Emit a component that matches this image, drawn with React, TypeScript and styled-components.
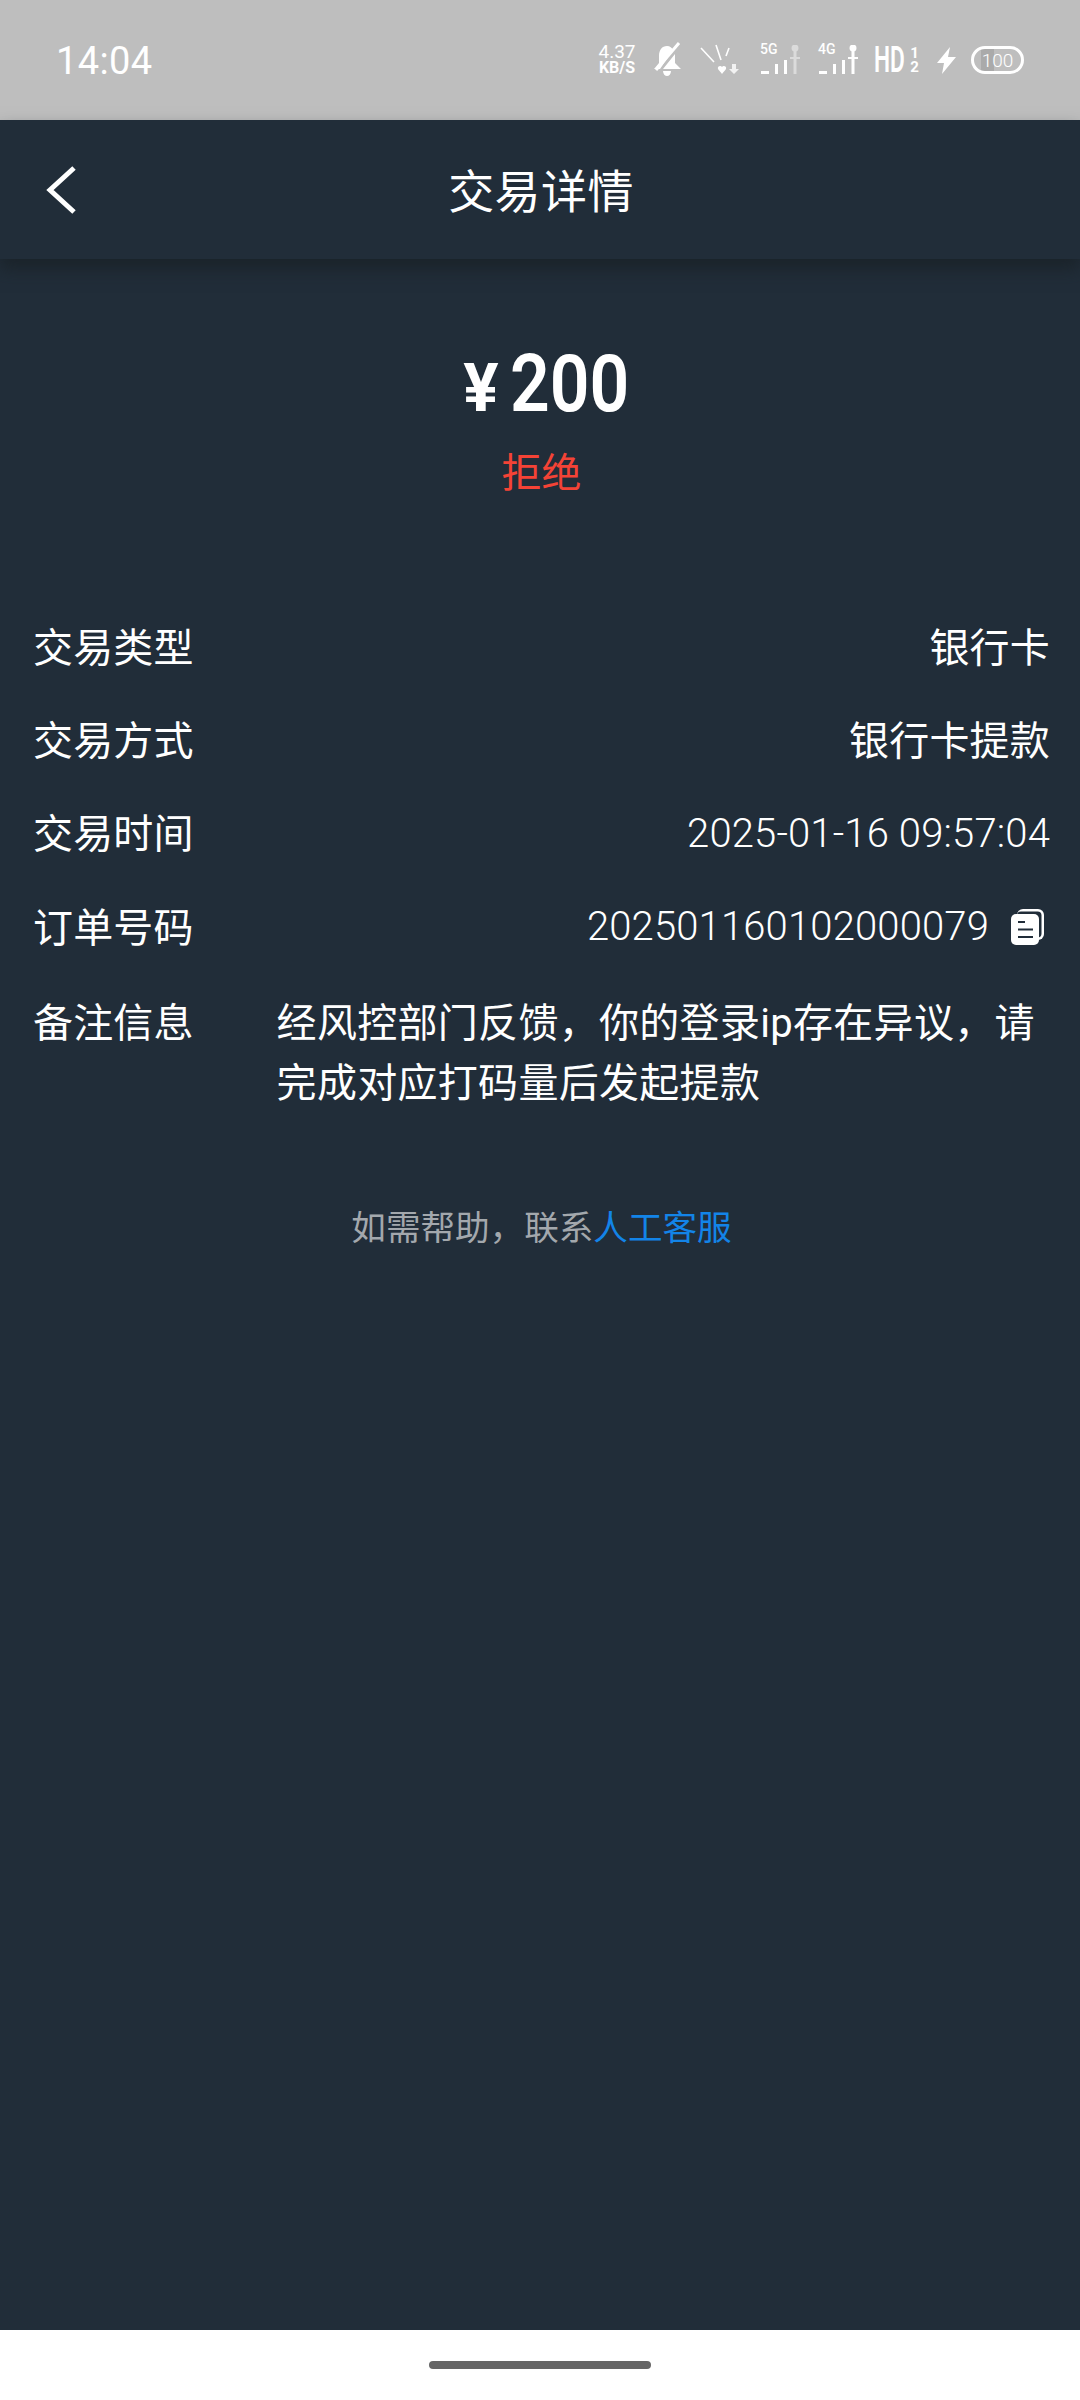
import React from "react";
import styled, { createGlobalStyle } from "styled-components";

const cjk = `Roboto, "Noto Sans CJK SC", sans-serif`;

const GlobalStyle = createGlobalStyle`
  html, body {
    margin: 0;
    padding: 0;
    background: #212d39;
  }
  * {
    box-sizing: border-box;
  }
`;

const Page = styled.div`
  display: flex;
  flex-direction: column;
  width: 1080px;
  height: 2400px;
  overflow: hidden;
  font-family: ${cjk};
  color: #fff;
  background: #212d39;
`;

const StatusBar = styled.div`
  display: flex;
  align-items: center;
  justify-content: space-between;
  flex: 0 0 120px;
  padding: 0 56px 0 56px;
  background: #bebebe;
`;
const Clock = styled.span`
  margin-top: 2px;
  font-size: 38px;
  font-weight: 400;
  letter-spacing: 0.4px;
  color: #fff;
`;
const StatusIcons = styled.div`
  display: flex;
  align-items: center;
`;
const StatusItem = styled.div<{ $gap: number }>`
  display: flex;
  align-items: center;
  margin-left: ${(p) => p.$gap}px;
`;
const Speed = styled.div`
  display: flex;
  flex-direction: column;
  align-items: center;
  width: 42px;
  font-size: 19px;
  line-height: 16px;
  font-weight: 400;
  white-space: nowrap;
  color: #fff;
`;
const SpeedUnit = styled.span`
  font-size: 16px;
  font-weight: 700;
`;
const Signal = styled.div`
  position: relative;
  width: 42px;
  height: 30px;
`;
const SignalLabel = styled.span`
  position: absolute;
  left: 0;
  top: -4px;
  font-size: 14px;
  line-height: 16px;
  font-weight: 500;
  color: #fff;
`;
const HdWrap = styled.div`
  display: flex;
  align-items: center;
  width: 45px;
  gap: 5px;
`;
const Hd = styled.span`
  display: inline-block;
  width: 31px;
  font-size: 36px;
  line-height: 30px;
  font-weight: 600;
  white-space: nowrap;
  transform: scaleX(0.63);
  transform-origin: left center;
  color: #fff;
`;
const HdFraction = styled.div`
  display: flex;
  flex-direction: column;
  align-items: center;
  width: 9px;
  font-size: 15px;
  line-height: 14px;
  font-weight: 700;
  color: #fff;
`;
const Battery = styled.div`
  display: flex;
  align-items: center;
  justify-content: center;
  width: 53px;
  height: 28px;
  border: 3px solid #fff;
  border-radius: 14px;
  font-size: 19px;
  font-weight: 300;
  color: #fff;
  background: linear-gradient(90deg, #bebebe 0 7px, #aaa 7px 20px, #bebebe 20px);
`;

const Header = styled.header`
  position: relative;
  display: grid;
  grid-template-columns: 120px 1fr 120px;
  align-items: center;
  flex: 0 0 139px;
  background: #212d39;
  box-shadow: 0 10px 16px rgba(24, 32, 36, 0.7);
`;
const BackButton = styled.button`
  display: flex;
  align-items: center;
  padding: 0 0 0 46px;
  border: 0;
  background: none;
`;
const Title = styled.h1`
  margin: 4px 0 0;
  padding-left: 2px;
  text-align: center;
  font-size: 46px;
  line-height: 60px;
  font-weight: 400;
  letter-spacing: 0.4px;
  color: #fff;
`;

const Content = styled.main`
  display: flex;
  flex-direction: column;
  flex: 1;
  padding: 0 30px 0 33px;
`;
const Summary = styled.section`
  display: flex;
  flex-direction: column;
  align-items: center;
  padding-top: 82px;
  margin-bottom: 100px;
`;
const Amount = styled.div`
  display: flex;
  align-items: baseline;
  height: 86px;
  padding-left: 8px;
  line-height: 86px;
  font-weight: 600;
`;
const Currency = styled.span`
  font-size: 66px;
  font-weight: 700;
  margin-right: 11px;
`;
const Digits = styled.span`
  display: inline-block;
  width: 118px;
  font-size: 80px;
  transform: scaleX(0.87);
  transform-origin: left center;
  white-space: nowrap;
`;
const Status = styled.div`
  margin-top: 19px;
  font-size: 40px;
  line-height: 56px;
  color: #f44336;
`;

const Rows = styled.dl`
  display: flex;
  flex-direction: column;
  margin: 0;
`;
const Row = styled.div`
  display: flex;
  align-items: center;
  justify-content: space-between;
  height: 93.3px;
`;
const Label = styled.dt`
  font-size: 40px;
  line-height: 60px;
  letter-spacing: 0.15px;
  color: #fff;
`;
const Value = styled.dd`
  display: flex;
  align-items: center;
  margin: 0;
  padding-bottom: 3px;
  font-size: 40px;
  line-height: 60px;
  font-weight: 300;
  letter-spacing: 0.15px;
  color: #fff;
`;
const CjkValue = styled(Value)`
  padding-bottom: 0;
  font-weight: 400;
  letter-spacing: 0.2px;
`;
const CopyIcon = styled.svg`
  margin-left: 22px;
  margin-right: 5px;
`;
const NoteRow = styled.div`
  display: flex;
  align-items: flex-start;
  margin-top: 19px;
`;
const NoteText = styled.dd`
  width: 765px;
  margin: 0 0 0 83px;
  font-size: 40px;
  line-height: 60px;
  font-weight: 400;
  letter-spacing: 0.3px;
  color: #fff;
`;
const Help = styled.p`
  margin: 88.5px 0 0;
  text-align: center;
  font-size: 34.6px;
  line-height: 50px;
  color: #a3a8ad;
`;
const HelpLink = styled.span`
  color: #1384e8;
`;

const HomeBar = styled.div`
  display: flex;
  align-items: center;
  justify-content: center;
  flex: 0 0 70px;
  background: #fff;
`;
const HomePill = styled.div`
  width: 222px;
  height: 8px;
  border-radius: 4px;
  background: #666;
`;

function MuteBell() {
  return (
    <svg width="30" height="36" viewBox="0 0 30 36" fill="#fff">
      <path d="M15 4c-5 0-8 4-8 10v7l-5 6h6L21 8c-1-2-3-4-6-4z" />
      <path d="M23 12v9l6 6H11z" />
      <path d="M11 29h8c0 3-2 5-4 5s-4-2-4-5z" />
      <path d="M4 28L27 1" stroke="#fff" strokeWidth="3" />
    </svg>
  );
}

function NoSimSignal() {
  return (
    <svg width="40" height="32" viewBox="0 0 40 32" fill="#fff">
      <path d="M1 4l13 14M16 1l5 15M29 4l-3 8" stroke="#fff" strokeWidth="1.6" fill="none" />
      <path d="M18 25c-1-3 3-4 4-2 1-2 5-1 4 2-1 2-3 3-4 5-1-2-3-3-4-5z" />
      <path d="M32 20h4v5h3l-5 5-5-5h3z" opacity="0.8" />
    </svg>
  );
}

function Bars({ dim }: { dim?: boolean }) {
  return (
    <svg width="42" height="30" viewBox="0 0 42 30" fill="#fff" style={{ display: "block" }}>
      <rect x="1" y="26" width="8" height="3" />
      <rect x="15" y="19" width="3" height="10" />
      <rect x="24" y="15" width="3" height="14" />
      <g opacity={dim ? 0.45 : 1}>
        <circle cx="35" cy="3" r="3.5" />
        <rect x="33.5" y="3" width="3" height="26" />
        <rect x="30" y="12" width="10" height="2" />
      </g>
    </svg>
  );
}

function Bolt() {
  return (
    <svg width="19" height="27" viewBox="0 0 19 27" fill="#fff">
      <path d="M13 0L0 16h7L5 27 19 10h-8z" />
    </svg>
  );
}

function CopyGlyph() {
  return (
    <CopyIcon width="34" height="36" viewBox="0 0 34 36">
      <rect x="6" y="0" width="27" height="31" rx="6" fill="#fff" />
      <rect x="6" y="2.5" width="24.5" height="26" rx="4" fill="#212d39" />
      <rect x="0" y="5" width="28" height="31" rx="5" fill="#fff" />
      <rect x="7" y="12" width="7" height="2" fill="#212d39" />
      <rect x="7" y="19.5" width="15" height="2" fill="#212d39" />
      <rect x="7" y="27" width="15" height="2" fill="#212d39" />
    </CopyIcon>
  );
}

export default function App() {
  return (
    <Page>
      <GlobalStyle />
      <StatusBar>
        <Clock>14:04</Clock>
        <StatusIcons>
          <Speed>
            <span>4.37</span>
            <SpeedUnit>KB/S</SpeedUnit>
          </Speed>
          <StatusItem $gap={14}>
            <MuteBell />
          </StatusItem>
          <StatusItem $gap={18}>
            <NoSimSignal />
          </StatusItem>
          <StatusItem $gap={20}>
            <Signal>
              <SignalLabel>5G</SignalLabel>
              <Bars dim />
            </Signal>
          </StatusItem>
          <StatusItem $gap={16}>
            <Signal>
              <SignalLabel>4G</SignalLabel>
              <Bars />
            </Signal>
          </StatusItem>
          <StatusItem $gap={14}>
            <HdWrap>
              <Hd>HD</Hd>
              <HdFraction>
                <span>1</span>
                <span>2</span>
              </HdFraction>
            </HdWrap>
          </StatusItem>
          <StatusItem $gap={18}>
            <Bolt />
          </StatusItem>
          <StatusItem $gap={15}>
            <Battery>100</Battery>
          </StatusItem>
        </StatusIcons>
      </StatusBar>

      <Header>
        <BackButton aria-label="back">
          <svg width="30" height="50" viewBox="0 0 30 50" fill="none">
            <path d="M28 3L4 25l24 22" stroke="#fff" strokeWidth="5" />
          </svg>
        </BackButton>
        <Title>交易详情</Title>
      </Header>

      <Content>
        <Summary>
          <Amount>
            <Currency>¥</Currency>
            <Digits>200</Digits>
          </Amount>
          <Status>拒绝</Status>
        </Summary>

        <Rows>
          <Row>
            <Label>交易类型</Label>
            <CjkValue>银行卡</CjkValue>
          </Row>
          <Row>
            <Label>交易方式</Label>
            <CjkValue>银行卡提款</CjkValue>
          </Row>
          <Row>
            <Label>交易时间</Label>
            <Value>2025-01-16 09:57:04</Value>
          </Row>
          <Row>
            <Label>订单号码</Label>
            <Value>
              202501160102000079
              <CopyGlyph />
            </Value>
          </Row>
          <NoteRow>
            <Label>备注信息</Label>
            <NoteText>经风控部门反馈，你的登录ip存在异议，请完成对应打码量后发起提款</NoteText>
          </NoteRow>
        </Rows>

        <Help>
          如需帮助，联系<HelpLink>人工客服</HelpLink>
        </Help>
      </Content>

      <HomeBar>
        <HomePill />
      </HomeBar>
    </Page>
  );
}
